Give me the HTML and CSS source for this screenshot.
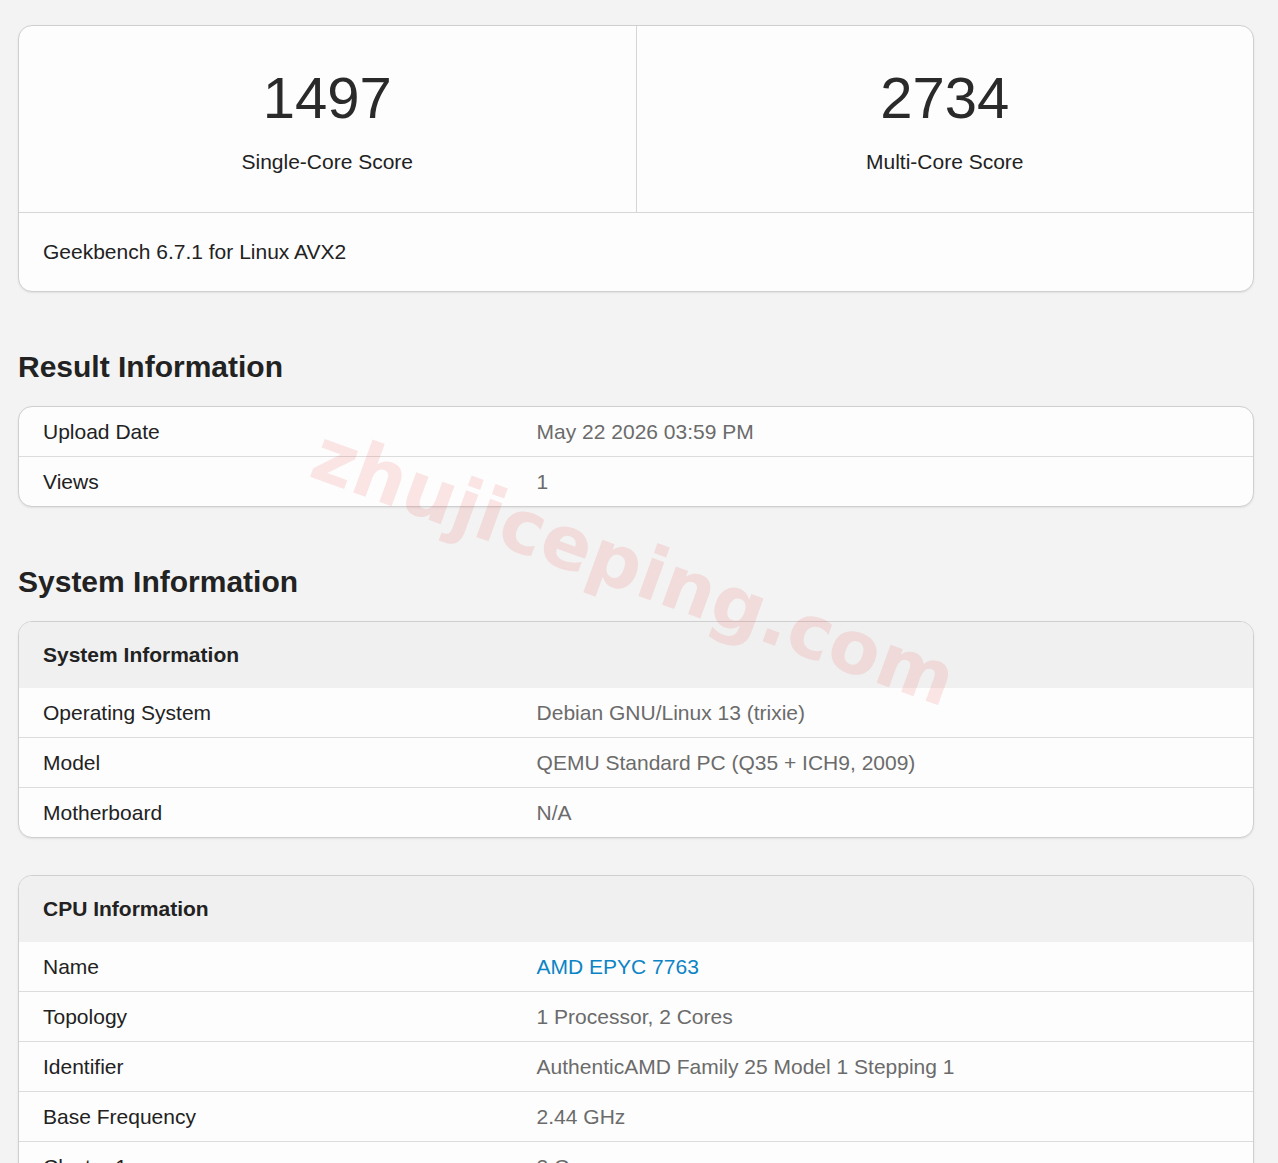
FILE: index.html
```html
<!DOCTYPE html>
<html lang="en">
<head>
    <meta charset="UTF-8">
    <meta name="viewport" content="width=device-width, initial-scale=1.0">
    <title>Geekbench Result</title>
    <link rel="stylesheet" href="styles.css">
</head>
<body>
    <div class="container">
        <div class="card score-card">
            <div class="scores">
                <div class="score">
                    <div class="score-value">1497</div>
                    <div class="score-name">Single-Core Score</div>
                </div>
                <div class="score">
                    <div class="score-value">2734</div>
                    <div class="score-name">Multi-Core Score</div>
                </div>
            </div>
            <div class="score-footer">Geekbench 6.7.1 for Linux AVX2</div>
        </div>

        <h2 class="section-title">Result Information</h2>
        <div class="card">
            <div class="row">
                <div class="label">Upload Date</div>
                <div class="value">May 22 2026 03:59 PM</div>
            </div>
            <div class="row">
                <div class="label">Views</div>
                <div class="value">1</div>
            </div>
        </div>

        <h2 class="section-title">System Information</h2>
        <div class="card">
            <div class="card-head">System Information</div>
            <div class="row">
                <div class="label">Operating System</div>
                <div class="value">Debian GNU/Linux 13 (trixie)</div>
            </div>
            <div class="row">
                <div class="label">Model</div>
                <div class="value">QEMU Standard PC (Q35 + ICH9, 2009)</div>
            </div>
            <div class="row">
                <div class="label">Motherboard</div>
                <div class="value">N/A</div>
            </div>
        </div>

        <div class="card cpu-card">
            <div class="card-head">CPU Information</div>
            <div class="row">
                <div class="label">Name</div>
                <div class="value"><a href="#">AMD EPYC 7763</a></div>
            </div>
            <div class="row">
                <div class="label">Topology</div>
                <div class="value">1 Processor, 2 Cores</div>
            </div>
            <div class="row">
                <div class="label">Identifier</div>
                <div class="value">AuthenticAMD Family 25 Model 1 Stepping 1</div>
            </div>
            <div class="row">
                <div class="label">Base Frequency</div>
                <div class="value">2.44 GHz</div>
            </div>
            <div class="row">
                <div class="label">Cluster 1</div>
                <div class="value">2 Cores</div>
            </div>
        </div>

        <!-- site watermark laid over the page -->
        <div class="watermark">zhujiceping.com</div>
    </div>
</body>
</html>
```

FILE: styles.css
```css
body {
    font-family: "Liberation Sans", Arial, sans-serif;
    margin: 0;
    padding: 0;
    background-color: #f3f3f3;
    color: #222;
}
.container {
    position: relative;
    width: 1236px;
    margin-left: 18px;
    padding-top: 25px;
}
.card {
    background-color: #fdfdfd;
    border: 1px solid #cfcfcf;
    border-radius: 14px;
    overflow: hidden;
    box-shadow: 0 1px 2px rgba(0, 0, 0, 0.08);
}
.scores {
    display: flex;
    border-bottom: 1px solid #d6d6d6;
}
.score {
    flex: 1;
    text-align: center;
    padding: 43px 0 38px;
}
.score + .score {
    border-left: 1px solid #d6d6d6;
}
.score-value {
    font-size: 58px;
    line-height: 58px;
    color: #2a2a2a;
}
.score-name {
    font-size: 21px;
    line-height: 25px;
    margin-top: 22px;
    color: #222;
}
.score-footer {
    font-size: 21px;
    line-height: 78px;
    padding: 0 24px;
    color: #222;
}
.section-title {
    font-size: 30px;
    line-height: 36px;
    font-weight: bold;
    margin: 57px 0 21px;
    color: #222;
}
.card-head {
    background-color: #f0f0f0;
    font-size: 21px;
    font-weight: bold;
    line-height: 66px;
    padding: 0 24px;
    color: #222;
}
.row {
    display: grid;
    grid-template-columns: 40% 60%;
    font-size: 21px;
    line-height: 49px;
}
.row + .row {
    border-top: 1px solid #dcdcdc;
}
.label {
    padding: 0 24px;
    color: #222;
}
.value {
    padding: 0 24px;
    color: #6b6b6b;
}
.value a {
    color: #0b84c6;
    text-decoration: none;
}
.cpu-card {
    margin-top: 37px;
    margin-bottom: 40px;
}
.watermark {
    position: absolute;
    left: 298px;
    top: 408px;
    font-family: "DejaVu Sans", sans-serif;
    font-weight: bold;
    font-size: 74px;
    color: rgba(235, 60, 60, 0.13);
    transform: rotate(20deg);
    transform-origin: left center;
    pointer-events: none;
    white-space: nowrap;
}
```
